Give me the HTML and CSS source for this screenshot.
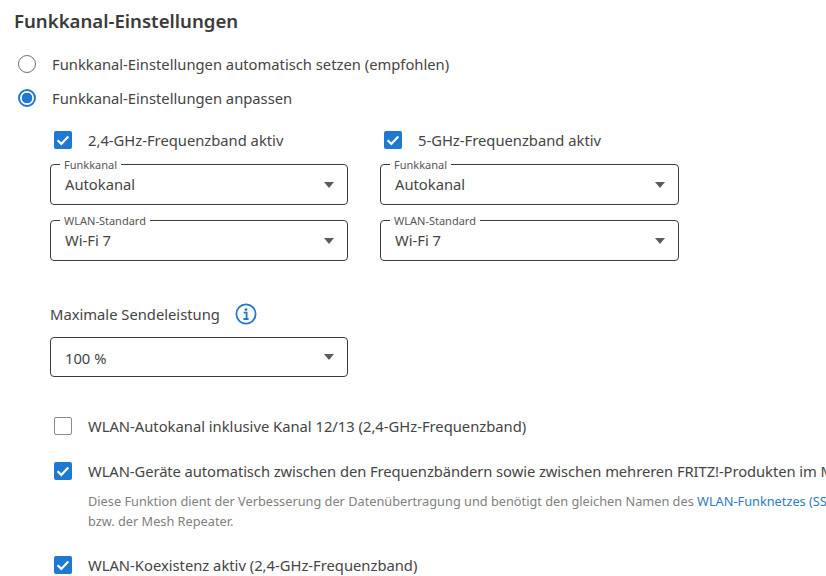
FILE: index.html
```html
<!DOCTYPE html>
<html lang="de">
<head>
    <meta charset="UTF-8">
    <meta name="viewport" content="width=device-width, initial-scale=1.0">
    <title>Funkkanal-Einstellungen</title>
    <link rel="stylesheet" href="styles.css">
</head>
<body>
    <h1>Funkkanal-Einstellungen</h1>

    <div class="radio-row">
        <span class="radio"></span>
        <span>Funkkanal-Einstellungen automatisch setzen (empfohlen)</span>
    </div>
    <div class="radio-row">
        <span class="radio selected"></span>
        <span>Funkkanal-Einstellungen anpassen</span>
    </div>

    <div class="bands">
        <div class="band">
            <div class="check-row">
                <span class="check on"><svg viewBox="0 0 18 18"><path d="M3.6 9.2l3.7 3.7 7-7.4"/></svg></span>
                <span>2,4-GHz-Frequenzband aktiv</span>
            </div>
            <div class="select">
                <span class="legend">Funkkanal</span>
                <span>Autokanal</span>
                <span class="arrow"></span>
            </div>
            <div class="select">
                <span class="legend">WLAN-Standard</span>
                <span>Wi-Fi 7</span>
                <span class="arrow"></span>
            </div>
        </div>
        <div class="band">
            <div class="check-row">
                <span class="check on"><svg viewBox="0 0 18 18"><path d="M3.6 9.2l3.7 3.7 7-7.4"/></svg></span>
                <span>5-GHz-Frequenzband aktiv</span>
            </div>
            <div class="select">
                <span class="legend">Funkkanal</span>
                <span>Autokanal</span>
                <span class="arrow"></span>
            </div>
            <div class="select">
                <span class="legend">WLAN-Standard</span>
                <span>Wi-Fi 7</span>
                <span class="arrow"></span>
            </div>
        </div>
    </div>

    <div class="power-label">
        <span>Maximale Sendeleistung</span>
        <svg class="info" viewBox="0 0 22 22">
            <circle cx="11" cy="11" r="9.6"/>
            <circle class="dot" cx="11" cy="6.6" r="1.4"/>
            <path d="M8.6 9.7h3v6M8.4 16h5.2"/>
        </svg>
    </div>
    <div class="select plain">
        <span>100 %</span>
        <span class="arrow"></span>
    </div>

    <div class="options">
        <div class="check-row">
            <span class="check"></span>
            <span>WLAN-Autokanal inklusive Kanal 12/13 (2,4-GHz-Frequenzband)</span>
        </div>
        <div class="check-row">
            <span class="check on"><svg viewBox="0 0 18 18"><path d="M3.6 9.2l3.7 3.7 7-7.4"/></svg></span>
            <span class="long">WLAN-Geräte automatisch zwischen den Frequenzbändern sowie zwischen mehreren FRITZ!-Produkten im Mesh</span>
        </div>
        <p class="hint">Diese Funktion dient der Verbesserung der Datenübertragung und benötigt den gleichen Namen des <a>WLAN-Funknetzes (SSID)</a><br>bzw. der Mesh Repeater.</p>
        <div class="check-row">
            <span class="check on"><svg viewBox="0 0 18 18"><path d="M3.6 9.2l3.7 3.7 7-7.4"/></svg></span>
            <span>WLAN-Koexistenz aktiv (2,4-GHz-Frequenzband)</span>
        </div>
    </div>
</body>
</html>
```

FILE: styles.css
```css
html, body {
    overflow: hidden;
}
body {
    font-family: 'Noto Sans', sans-serif;
    font-size: 14.75px;
    margin: 0;
    padding: 0;
    height: 576px;
    background: white;
    color: #444;
    white-space: nowrap;
}
h1 {
    font-size: 18.6px;
    font-weight: 600;
    line-height: 22px;
    margin: 0;
    padding: 10px 0 0 14px;
    color: #3a3a3a;
}
.radio-row {
    display: flex;
    align-items: center;
    gap: 16px;
    height: 34px;
    padding-left: 18px;
}
h1 + .radio-row {
    margin-top: 15px;
}
.radio {
    width: 18px;
    height: 18px;
    box-sizing: border-box;
    border: 1.5px solid #707070;
    border-radius: 50%;
}
.radio.selected {
    border: 2px solid #1f78d1;
    background: radial-gradient(circle, #1f78d1 0 5px, white 5.6px);
}
.bands {
    display: flex;
    gap: 32px;
    padding: 8px 0 0 50px;
}
.band {
    width: 298px;
}
.band + .band {
    width: 299px;
}
.band .check-row {
    margin-bottom: 7px;
}
.check-row {
    display: flex;
    align-items: center;
    gap: 16px;
    height: 34px;
    padding-left: 4px;
}
.check {
    width: 18px;
    height: 18px;
    box-sizing: border-box;
    border: 1.5px solid #8a8a8a;
    border-radius: 2px;
    flex-shrink: 0;
}
.check.on {
    background: #1f78d1;
    border: 0;
}
.check svg {
    display: block;
}
.check path {
    fill: none;
    stroke: white;
    stroke-width: 2.2;
}
.long {
    letter-spacing: -0.07px;
}
.select {
    position: relative;
    display: flex;
    align-items: center;
    height: 41px;
    box-sizing: border-box;
    margin-bottom: 15px;
    padding: 0 0 2px 14px;
    border: 1px solid #3c3c3c;
    border-radius: 4px;
}
.select > span:first-child:not(.legend) {
    padding-top: 2px;
}
.legend {
    position: absolute;
    top: -7px;
    left: 9px;
    padding: 0 4px;
    background: white;
    font-size: 11px;
    line-height: 14px;
    color: #555;
}
.arrow {
    position: absolute;
    right: 13px;
    top: 17px;
    border-left: 5px solid transparent;
    border-right: 5px solid transparent;
    border-top: 6px solid #5c5c5c;
}
.select.plain {
    width: 298px;
    height: 40px;
    margin: 11px 0 0 50px;
    padding: 0 0 0 14px;
}
.select.plain .arrow {
    top: 16px;
}
.power-label {
    display: flex;
    align-items: center;
    gap: 15px;
    height: 24px;
    margin-top: 26px;
    padding-left: 50px;
}
.info {
    width: 22px;
    height: 22px;
}
.info circle {
    fill: none;
    stroke: #1f78d1;
    stroke-width: 1.8;
}
.info .dot {
    fill: #1f78d1;
    stroke: none;
}
.info path {
    fill: none;
    stroke: #1f78d1;
    stroke-width: 1.8;
}
.options {
    padding: 32px 0 0 50px;
}
.options .check-row + .check-row {
    margin-top: 11px;
}
.hint {
    font-size: 12.75px;
    line-height: 20px;
    color: #808080;
    margin: 3px 0 17px 38px;
}
.hint a {
    color: #2b7cc4;
}
```
